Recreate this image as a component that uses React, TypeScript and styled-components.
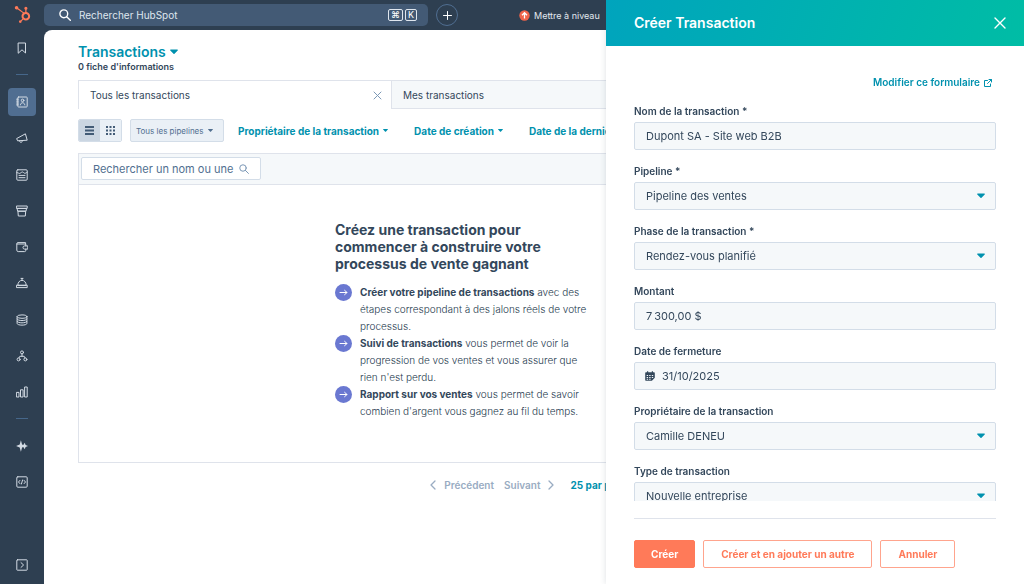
import React from "react";
import styled, { createGlobalStyle, css } from "styled-components";
import { FaHubspot } from "react-icons/fa";

const color = {
  navy: "#2e3f51",
  navyField: "#435a75",
  navyActive: "#506e91",
  text: "#33475b",
  body: "#263a4e",
  muted: "#516f90",
  disabled: "#99acc2",
  link: "#0091ae",
  line: "#dfe3eb",
  fieldLine: "#d3dde8",
  surface: "#f5f8fa",
  coral: "#ff7a59",
  violet: "#6a78d1",
};

const GlobalStyle = createGlobalStyle`
  *, *::before, *::after { box-sizing: border-box; }
  body {
    margin: 0;
    background: ${color.navy};
    color: ${color.text};
    font-family: Inter, "Open Sans", sans-serif;
    font-size: 10px;
  }
  button, input, select { font: inherit; color: inherit; }
  button { padding: 0; border: 0; background: none; cursor: pointer; }
  h1, h2, p, ul { margin: 0; padding: 0; }
  a { text-decoration: none; }
  svg { display: block; flex: none; }
`;

/* ---------- icons ---------- */

const Stroke = styled.svg.attrs({ "aria-hidden": true })<{ $weight?: number }>`
  fill: none;
  stroke: currentColor;
  stroke-width: ${(p) => p.$weight ?? 1};
  stroke-linecap: round;
  stroke-linejoin: round;
`;

const Solid = styled.svg.attrs({ "aria-hidden": true })`
  fill: currentColor;
`;

const NavIcon = ({ children }: { children: React.ReactNode }) => (
  <Stroke width="12" height="12" viewBox="0 0 12 12">{children}</Stroke>
);

const Caret = ({ size = 5 }: { size?: number }) => (
  <Solid width={size} height={size} viewBox="0 0 8 8">
    <path d="M.7 1.5h6.6c.6 0 .8.6.4 1L4.5 5.8a.7.7 0 0 1-1 0L.3 2.5c-.4-.4-.2-1 .4-1z" />
  </Solid>
);

const Close = ({ size, weight }: { size: number; weight?: number }) => (
  <Stroke width={size} height={size} viewBox={`0 0 ${size} ${size}`} $weight={weight}>
    <path d={`M1 1 ${size - 1} ${size - 1}M${size - 1} 1 1 ${size - 1}`} />
  </Stroke>
);

const Magnifier = ({ size, weight }: { size: number; weight: number }) => (
  <Stroke width={size} height={size} viewBox="0 0 12 12" $weight={weight}>
    <circle cx="4.8" cy="4.8" r="3.9" />
    <path d="m7.7 7.7 3.6 3.6" />
  </Stroke>
);

const icons = {
  bookmark: <path d="M2.5 1h7v10L6 7.8 2.5 11z" />,
  contacts: (
    <>
      <rect x="1.8" y="1" width="9.4" height="10" rx=".8" />
      <path d="M.6 3.2h1.8M.6 5.1h1.8M.6 7h1.8M.6 8.9h1.8" />
      <circle cx="6.6" cy="4.4" r="1.3" />
      <path d="M4.4 8.9c.2-3 4.2-3 4.4 0" />
    </>
  ),
  megaphone: (
    <>
      <path d="M1 6.4 9.4 1.8l1.8 6.4L2 8.8z" />
      <path d="M3.4 8.8c.4 2.4 3 2 3.2-.3" />
    </>
  ),
  document: (
    <>
      <rect x=".8" y=".8" width="10.4" height="10.4" rx="1" />
      <path d="M.8 3.6c2 0 2 1.4 3.4.6s2-2 3.4-.6 2 .4 3.6-.4M3 6.4h6M3 8.7h6" />
    </>
  ),
  commerce: <path d="M.8 1h10.4v2.4H.8zM1.5 3.4h9l-.5 2.8H2zM2.3 6.2h7.4l-.4 4.8H2.7z" />,
  wallet: (
    <>
      <path d="M9.6 3V1.6H2A1.2 1.2 0 0 0 .8 2.8v6.4c0 .8.6 1.4 1.4 1.4h6.4c.8 0 1.2-.5 1.2-1.2V8.2M1 3h8.8v1.8" />
      <path d="M11.4 4.9H8.6a1.6 1.6 0 0 0 0 3.2h2.8z" />
    </>
  ),
  service: (
    <>
      <path d="M1.8 8.2C1.8 1.6 10.2 1.6 10.2 8.2zM.8 8.2h10.4v2.4H.8z" />
      <path d="M5 1.4h2M6 1.4v1.8" />
    </>
  ),
  data: (
    <>
      <ellipse cx="6" cy="2.6" rx="4.9" ry="1.7" />
      <path d="M1.1 2.6v6.8c0 2.3 9.8 2.3 9.8 0V2.6M1.1 5c0 2.2 9.8 2.2 9.8 0M1.1 7.3c0 2.2 9.8 2.2 9.8 0" />
    </>
  ),
  automation: (
    <>
      <circle cx="6" cy="2.4" r="1.5" />
      <circle cx="2.6" cy="9.4" r="1.5" />
      <circle cx="9.4" cy="9.4" r="1.5" />
      <path d="M6 3.9v2.3M3 7.9l.8-1.6h4.4L9 7.9" />
    </>
  ),
  reports: (
    <>
      <rect x=".8" y="6.4" width="2.2" height="4.6" />
      <rect x="4.9" y="3.8" width="2.2" height="7.2" />
      <rect x="9" y="1" width="2.2" height="10" />
    </>
  ),
  sparkle: (
    <path
      d="M4.9.2 6.1 4.4 7.3 5.1 8.7 2.8l.9 2.2 2.4 1-2.4 1-.9 2.2-1.4-2.3-1.2.7L4.9 11.8 3.7 7.4.1 6l3.6-1.4z"
      fill="currentColor"
      stroke="none"
    />
  ),
  code: (
    <>
      <rect x=".8" y=".8" width="10.4" height="10.4" rx="1" />
      <path d="M3.9 4.4 2.5 6l1.4 1.6M8.1 4.4 9.5 6 8.1 7.6M6.6 4 5.4 8" />
    </>
  ),
  expand: (
    <>
      <rect x=".8" y=".8" width="10.4" height="10.4" rx=".6" />
      <path d="M5 3.6 7.6 6 5 8.4" />
    </>
  ),
};

/* ---------- shell ---------- */

const Shell = styled.div`
  display: grid;
  grid-template-columns: 44px minmax(0, 1fr);
  min-height: 100vh;
`;

const Sidebar = styled.nav`
  display: flex;
  flex-direction: column;
  align-items: center;
  padding: 6px 0 5px;
  color: #d3dbe4;
`;

const Logo = styled.a`
  color: ${color.coral};
  margin-bottom: 11px;
`;

const NavGroup = styled.div<{ $stretch?: boolean }>`
  display: flex;
  flex-direction: column;
  gap: 8px;
  ${(p) => p.$stretch && "justify-content: space-between; height: 318px;"}
`;

const NavButton = styled.button<{ $active?: boolean }>`
  display: grid;
  place-items: center;
  width: 28px;
  height: 28px;
  border-radius: 4px;
  background: ${(p) => (p.$active ? color.navyActive : "transparent")};
`;

const NavDivider = styled.hr`
  width: 12px;
  margin: 12px 0 13px;
  border: 0;
  border-top: 1px solid #46678a;
`;

const NavFoot = styled.div`
  margin-top: auto;
`;

const Column = styled.div`
  display: flex;
  flex-direction: column;
  min-width: 0;
`;

const TopBar = styled.header`
  display: flex;
  align-items: center;
  height: 30px;
  white-space: nowrap;
  overflow: hidden;
`;

const GlobalSearch = styled.label`
  display: flex;
  align-items: center;
  gap: 8px;
  width: 384px;
  height: 22px;
  padding: 0 11px 0 15px;
  border-radius: 5px;
  background: ${color.navyField};
  color: #fff;
`;

const GlobalSearchInput = styled.input`
  flex: 1;
  min-width: 0;
  border: 0;
  padding: 0;
  outline: 0;
  background: none;
  &::placeholder { color: #dfe6ee; opacity: 1; }
`;

const Keys = styled.span`
  display: flex;
  gap: 2px;
`;

const Key = styled.kbd`
  display: grid;
  place-items: center;
  min-width: 12px;
  height: 12px;
  padding: 0 2px;
  border: 1px solid #dfe6ee;
  border-radius: 2px;
  color: #fff;
  font: 9px/10px Inter, "DejaVu Sans", sans-serif;
`;

const AddButton = styled.button`
  display: grid;
  place-items: center;
  width: 22px;
  height: 22px;
  margin: 0 61px 0 8px;
  border: 1px solid #506e91;
  border-radius: 50%;
  color: #fff;
`;

const Upgrade = styled.a`
  display: flex;
  align-items: center;
  gap: 4px;
  color: #e3e9ef;
  font-size: 9px;
`;

/* ---------- page ---------- */

const Page = styled.main`
  flex: 1;
  min-width: 0;
  padding: 14px 34px 24px;
  overflow: hidden;
  border-radius: 8px 0 0 0;
  background: #fff;
`;

const TitleButton = styled.button`
  display: flex;
  align-items: center;
  gap: 4px;
  color: ${color.link};
  font-size: 14px;
  font-weight: 600;
  line-height: 16px;
`;

const Count = styled.p`
  margin-top: 1px;
  font-size: 9px;
  font-weight: 600;
  line-height: 12px;
`;

const Tabs = styled.div`
  display: flex;
  margin-top: 7px;
  border: solid ${color.line};
  border-width: 1px 0 0 1px;
  overflow: hidden;
`;

const Tab = styled.button<{ $active?: boolean }>`
  display: flex;
  flex: 0 0 313px;
  align-items: center;
  justify-content: space-between;
  height: 28px;
  padding: 0 9px 0 11px;
  border-right: 1px solid ${color.line};
  ${(p) =>
    !p.$active &&
    css`
      background: ${color.surface};
      border-bottom: 1px solid ${color.line};
    `}
  svg { color: #7c98b6; }
`;

const Filters = styled.div`
  display: flex;
  align-items: center;
  gap: 26px;
  margin: 10px 0 11px;
  white-space: nowrap;
`;

const ViewTools = styled.div`
  display: flex;
  gap: 8px;
  margin-right: -12px;
`;

const Segmented = styled.div`
  display: flex;
  overflow: hidden;
  border: 1px solid ${color.fieldLine};
  border-radius: 2px;
`;

const Segment = styled.button<{ $active?: boolean }>`
  display: grid;
  place-items: center;
  width: 21px;
  height: 21px;
  background: ${(p) => (p.$active ? "#cbd6e2" : "#eaf0f6")};
  color: #425b76;
`;

const PipelineButton = styled.button`
  display: flex;
  align-items: center;
  gap: 4px;
  width: 94px;
  height: 23px;
  padding: 0 5px;
  border: 1px solid ${color.fieldLine};
  border-radius: 2px;
  background: #eaf0f6;
  color: ${color.muted};
  font-size: 8px;
`;

const FilterButton = styled.button`
  display: flex;
  align-items: center;
  gap: 4px;
  color: ${color.link};
  font-weight: 700;
`;

const Board = styled.section`
  border: 1px solid ${color.line};
`;

const BoardBar = styled.div`
  padding: 3px 2px 4px;
  border-bottom: 1px solid ${color.line};
  background: ${color.surface};
`;

const BoardSearch = styled.label`
  display: flex;
  align-items: center;
  gap: 4px;
  width: 180px;
  height: 23px;
  padding: 0 11px;
  border: 1px solid ${color.fieldLine};
  border-radius: 2px;
  background: #fff;
  color: #7c98b6;
`;

const BoardSearchInput = styled.input`
  flex: 1;
  min-width: 0;
  border: 0;
  padding: 0;
  outline: 0;
  background: none;
  font-size: 11px;
  &::placeholder { color: ${color.muted}; opacity: 1; }
`;

const EmptyState = styled.div`
  width: 398px;
  max-width: 100%;
  margin: 0 auto;
  padding: 36px 0 42px;
`;

const EmptyTitle = styled.h2`
  max-width: 250px;
  font-size: 14px;
  font-weight: 700;
  line-height: 17px;
`;

const Benefits = styled.ul`
  width: 260px;
  margin-top: 12px;
  list-style: none;
`;

const Benefit = styled.li`
  display: grid;
  grid-template-columns: 17px 1fr;
  gap: 8px;
  color: ${color.body};
  font-weight: 300;
  line-height: 17px;
`;

const Bullet = styled.span`
  display: grid;
  place-items: center;
  width: 17px;
  height: 17px;
  border-radius: 50%;
  background: ${color.violet};
  color: #fff;
`;

const Strong = styled.strong`
  color: ${color.text};
  font-weight: 700;
`;

const Pagination = styled.div`
  display: flex;
  align-items: center;
  justify-content: center;
  gap: 10px;
  margin-top: 16px;
  white-space: nowrap;
`;

const PageStep = styled.button`
  display: flex;
  align-items: center;
  gap: 8px;
  color: ${color.disabled};
  font-weight: 600;
`;

const PageSize = styled(FilterButton)`
  margin-left: 6px;
`;

/* ---------- drawer ---------- */

const Drawer = styled.aside`
  position: fixed;
  top: 0;
  right: 0;
  bottom: 0;
  display: flex;
  flex-direction: column;
  width: 418px;
  max-width: 100%;
  background: #fff;
  box-shadow: 0 0 6px rgba(45, 62, 80, 0.16);
`;

const DrawerHeader = styled.header`
  display: flex;
  flex: none;
  align-items: center;
  justify-content: space-between;
  height: 46px;
  padding: 0 18px 0 28px;
  background: linear-gradient(110deg, #00a4bd, #00bda5);
  color: #fff;
`;

const DrawerTitle = styled.h2`
  font-size: 14px;
  font-weight: 600;
  line-height: 16px;
`;

const Form = styled.form`
  display: flex;
  flex: 1;
  flex-direction: column;
  min-height: 0;
  padding: 0 28px;
`;

const FormBody = styled.div`
  display: flex;
  flex: 1;
  flex-direction: column;
  gap: 14px;
  min-height: 0;
  padding: 29px 0 16px;
  overflow-y: auto;
  scrollbar-width: none;
`;

const EditLink = styled.a`
  display: flex;
  align-items: center;
  align-self: flex-end;
  gap: 4px;
  padding-right: 4px;
  color: ${color.link};
  font-weight: 600;
  line-height: 15px;
`;

const Field = styled.div`
  display: flex;
  flex-direction: column;
  gap: 3px;
`;

const FieldLabel = styled.label`
  font-weight: 600;
  line-height: 15px;
`;

const control = css`
  grid-area: 1 / 1;
  width: 100%;
  height: 28px;
  padding: 0 11px;
  border: 1px solid ${color.fieldLine};
  border-radius: 2px;
  outline: 0;
  background: ${color.surface};
  font-size: 11px;
`;

const ControlBox = styled.div`
  display: grid;
  align-items: center;
`;

const TextInput = styled.input<{ $withIcon?: boolean }>`
  ${control}
  ${(p) => p.$withIcon && "padding-left: 27px;"}
`;

const Select = styled.select`
  ${control}
  appearance: none;
`;

const ControlIcon = styled.span<{ $end?: boolean }>`
  z-index: 1;
  grid-area: 1 / 1;
  justify-self: ${(p) => (p.$end ? "end" : "start")};
  padding: 0 11px;
  color: ${(p) => (p.$end ? color.link : color.text)};
  pointer-events: none;
`;

const FormFooter = styled.footer`
  display: flex;
  flex: none;
  gap: 8px;
  margin-top: 17px;
  padding: 21px 0 16px;
  border-top: 1px solid ${color.line};
`;

const ActionButton = styled.button<{ $primary?: boolean }>`
  height: 28px;
  padding: 0 ${(p) => (p.$primary ? 16 : 17)}px;
  border: 1px solid ${(p) => (p.$primary ? color.coral : "#ffa48d")};
  border-radius: 2px;
  background: ${(p) => (p.$primary ? color.coral : "#fff")};
  color: ${(p) => (p.$primary ? "#fff" : color.coral)};
  font-weight: 700;
`;

/* ---------- content ---------- */

const mainNav: [keyof typeof icons, string][] = [
  ["contacts", "CRM"],
  ["megaphone", "Marketing"],
  ["document", "Contenu"],
  ["commerce", "Ventes"],
  ["wallet", "Commerce"],
  ["service", "Service"],
  ["data", "Données"],
  ["automation", "Automatisation"],
  ["reports", "Rapports"],
];

const benefits: [string, string][] = [
  ["Créer votre pipeline de transactions", "avec des étapes correspondant à des jalons réels de votre processus."],
  ["Suivi de transactions", "vous permet de voir la progression de vos ventes et vous assurer que rien n'est perdu."],
  ["Rapport sur vos ventes", "vous permet de savoir combien d'argent vous gagnez au fil du temps."],
];

type FieldSpec = { id: string; label: string; value: string; kind: "text" | "select" | "date" };

const fields: FieldSpec[] = [
  { id: "name", label: "Nom de la transaction *", value: "Dupont SA - Site web B2B", kind: "text" },
  { id: "pipeline", label: "Pipeline *", value: "Pipeline des ventes", kind: "select" },
  { id: "stage", label: "Phase de la transaction *", value: "Rendez-vous planifié", kind: "select" },
  { id: "amount", label: "Montant", value: "7\u202f300,00 $", kind: "text" },
  { id: "close", label: "Date de fermeture", value: "31/10/2025", kind: "date" },
  { id: "owner", label: "Propriétaire de la transaction", value: "Camille DENEU", kind: "select" },
  { id: "type", label: "Type de transaction", value: "Nouvelle entreprise", kind: "select" },
];

const FormField = ({ id, label, value, kind }: FieldSpec) => (
  <Field>
    <FieldLabel htmlFor={id}>{label}</FieldLabel>
    <ControlBox>
      {kind === "select" ? (
        <>
          <Select id={id} defaultValue={value}>
            <option>{value}</option>
          </Select>
          <ControlIcon $end>
            <Caret size={8} />
          </ControlIcon>
        </>
      ) : (
        <TextInput id={id} type="text" defaultValue={value} $withIcon={kind === "date"} />
      )}
      {kind === "date" && (
        <ControlIcon>
          <Solid width="10" height="10" viewBox="0 0 10 10">
            <path
              fillRule="evenodd"
              d="M2 .2h1.2v1h3.6v-1H8v1h.8c.6 0 1 .4 1 1v4.6L6.9 9.8H1.2c-.6 0-1-.4-1-1V2.2c0-.6.4-1 1-1H2zM1.7 4v1h1.4V4zm2.5 0v1h1.4V4zm2.6 0v1h1.4V4zM1.7 5.900v1h1.4v-1zm2.5 0v1h1.4v-1zm2.6 0v1h1.4v-1zM1.7 7.800v.9h1.4v-.9zm2.5 0v.9h1.4v-.9z"
            />
          </Solid>
        </ControlIcon>
      )}
    </ControlBox>
  </Field>
);

export default function App() {
  return (
    <>
      <GlobalStyle />
      <Shell>
        <Sidebar aria-label="Navigation principale">
          <Logo href="#" aria-label="HubSpot">
            <FaHubspot size={17} />
          </Logo>
          <NavButton aria-label="Favoris">
            <NavIcon>{icons.bookmark}</NavIcon>
          </NavButton>
          <NavDivider />
          <NavGroup $stretch>
            {mainNav.map(([icon, label], i) => (
              <NavButton key={icon} aria-label={label} $active={i === 0}>
                <NavIcon>{icons[icon]}</NavIcon>
              </NavButton>
            ))}
          </NavGroup>
          <NavDivider />
          <NavGroup>
            <NavButton aria-label="Assistant">
              <NavIcon>{icons.sparkle}</NavIcon>
            </NavButton>
            <NavButton aria-label="Développement">
              <NavIcon>{icons.code}</NavIcon>
            </NavButton>
          </NavGroup>
          <NavFoot>
            <NavButton aria-label="Développer le menu">
              <NavIcon>{icons.expand}</NavIcon>
            </NavButton>
          </NavFoot>
        </Sidebar>

        <Column>
          <TopBar>
            <GlobalSearch>
              <Magnifier size={12} weight={1.4} />
              <GlobalSearchInput type="text" placeholder="Rechercher HubSpot" aria-label="Rechercher HubSpot" />
              <Keys>
                <Key>⌘</Key>
                <Key>K</Key>
              </Keys>
            </GlobalSearch>
            <AddButton aria-label="Ajouter">
              <Stroke width="9" height="9" viewBox="0 0 9 9">
                <path d="M4.5.5v8M.5 4.5h8" />
              </Stroke>
            </AddButton>
            <Upgrade href="#">
              <svg width="11" height="11" viewBox="0 0 11 11" aria-hidden>
                <circle cx="5.5" cy="5.5" r="5.2" fill="#f0644a" />
                <path d="M5.5 8.6V2.8M3 5.2l2.5-2.5L8 5.2" fill="none" stroke="#fff" strokeWidth="1.3" />
              </svg>
              Mettre à niveau
            </Upgrade>
          </TopBar>

          <Page>
            <h1>
              <TitleButton>
                Transactions
                <Caret size={8} />
              </TitleButton>
            </h1>
            <Count>0 fiche d'informations</Count>

            <Tabs role="tablist">
              <Tab role="tab" aria-selected $active>
                Tous les transactions
                <Close size={9} />
              </Tab>
              <Tab role="tab" aria-selected={false}>Mes transactions</Tab>
              <Tab role="tab" aria-selected={false} />
            </Tabs>

            <Filters>
              <ViewTools>
                <Segmented>
                  <Segment $active aria-label="Liste">
                    <Solid width="9" height="9" viewBox="0 0 9 9">
                      <path d="M0 0h9v2H0zM0 3.5h9v2H0zM0 7h9v2H0z" />
                    </Solid>
                  </Segment>
                  <Segment aria-label="Tableau">
                    <Solid width="9" height="9" viewBox="0 0 9 9">
                      <path d="M0 0h2v2H0zM3.5 0h2v2h-2zM7 0h2v2H7zM0 3.5h2v2H0zM3.5 3.5h2v2h-2zM7 3.5h2v2H7zM0 7h2v2H0zM3.5 7h2v2h-2zM7 7h2v2H7z" />
                    </Solid>
                  </Segment>
                </Segmented>
                <PipelineButton>
                  Tous les pipelines
                  <Caret />
                </PipelineButton>
              </ViewTools>
              <FilterButton>
                Propriétaire de la transaction
                <Caret />
              </FilterButton>
              <FilterButton>
                Date de création
                <Caret />
              </FilterButton>
              <FilterButton>
                Date de la dernière activité
                <Caret />
              </FilterButton>
            </Filters>

            <Board>
              <BoardBar>
                <BoardSearch>
                  <BoardSearchInput
                    type="text"
                    placeholder="Rechercher un nom ou une"
                    aria-label="Rechercher un nom ou une"
                  />
                  <Magnifier size={10} weight={1.2} />
                </BoardSearch>
              </BoardBar>
              <EmptyState>
                <EmptyTitle>Créez une transaction pour commencer à construire votre processus de vente gagnant</EmptyTitle>
                <Benefits>
                  {benefits.map(([lead, rest]) => (
                    <Benefit key={lead}>
                      <Bullet>
                        <Stroke width="9" height="9" viewBox="0 0 9 9">
                          <path d="M1 4.5h7M5.6 2.3 8 4.5 5.6 6.7" />
                        </Stroke>
                      </Bullet>
                      <p>
                        <Strong>{lead}</Strong> {rest}
                      </p>
                    </Benefit>
                  ))}
                </Benefits>
              </EmptyState>
            </Board>

            <Pagination>
              <PageStep disabled>
                <Stroke width="6" height="10" viewBox="0 0 6 10" $weight={1.3}>
                  <path d="M5 1 1 5l4 4" />
                </Stroke>
                Précédent
              </PageStep>
              <PageStep disabled>
                Suivant
                <Stroke width="6" height="10" viewBox="0 0 6 10" $weight={1.3}>
                  <path d="m1 1 4 4-4 4" />
                </Stroke>
              </PageStep>
              <PageSize>
                25 par page
                <Caret />
              </PageSize>
            </Pagination>
          </Page>
        </Column>
      </Shell>

      <Drawer aria-label="Créer Transaction">
        <DrawerHeader>
          <DrawerTitle>Créer Transaction</DrawerTitle>
          <button type="button" aria-label="Fermer">
            <Close size={12} weight={1.4} />
          </button>
        </DrawerHeader>
        <Form>
          <FormBody>
            <EditLink href="#">
              Modifier ce formulaire
              <Stroke width="8" height="8" viewBox="0 0 8 8">
                <path d="M3.5 1.5h-3v6h6V5M5 .5h2.5V3M7.5.5l-4 4" />
              </Stroke>
            </EditLink>
            {fields.map((f) => (
              <FormField key={f.id} {...f} />
            ))}
          </FormBody>
          <FormFooter>
            <ActionButton type="submit" $primary>Créer</ActionButton>
            <ActionButton type="button">Créer et en ajouter un autre</ActionButton>
            <ActionButton type="button">Annuler</ActionButton>
          </FormFooter>
        </Form>
      </Drawer>
    </>
  );
}
